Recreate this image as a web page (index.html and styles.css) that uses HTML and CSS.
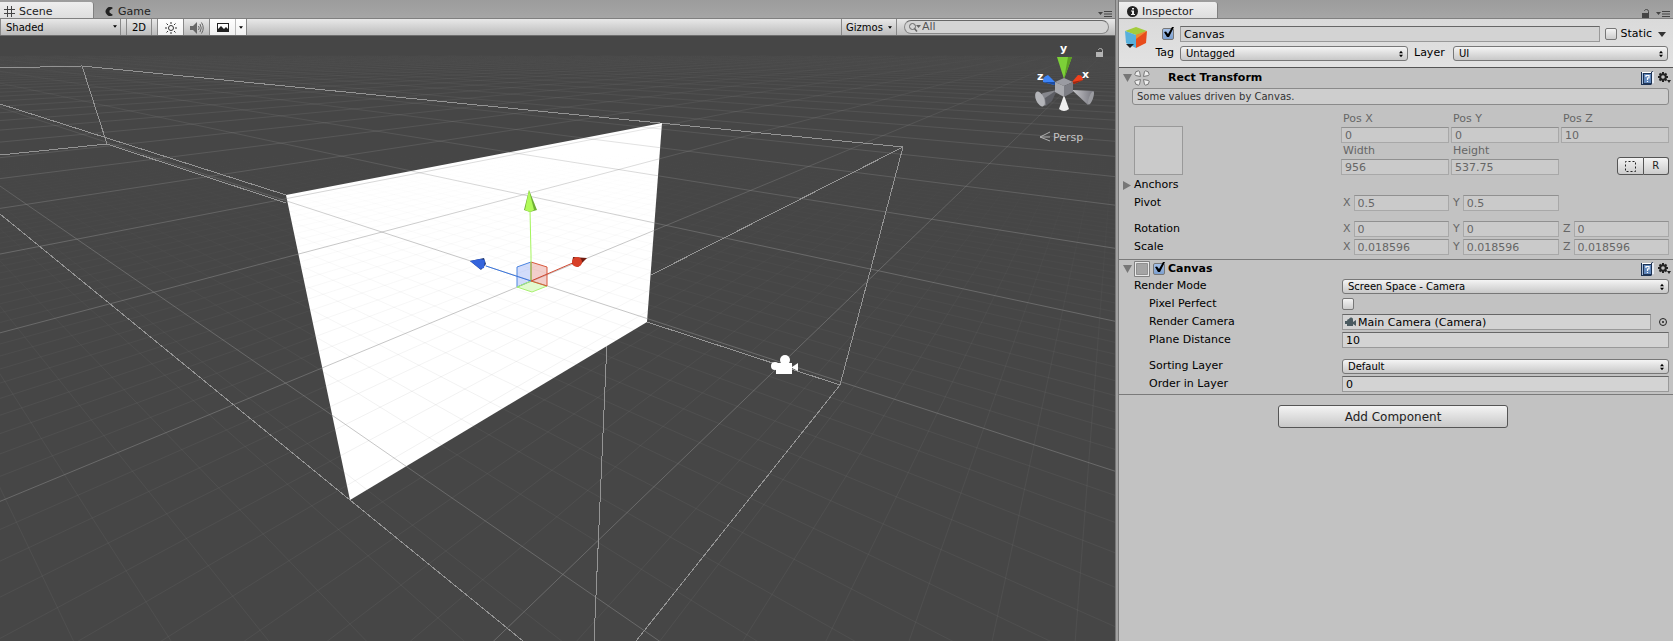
FILE: index.html
```html
<!DOCTYPE html>
<html lang="en">
<head>
<meta charset="utf-8">
<title>Scene</title>
<link rel="stylesheet" href="styles.css">
</head>
<body>

<!-- shared icons -->
<svg class="defs" width="0" height="0">
	<symbol id="updown" viewBox="0 0 5 8"><path d="M0 3L2.500 0L5 3zM0 5L2.500 8L5 5z"/></symbol>
	<symbol id="down" viewBox="0 0 6 4"><path d="M0 0H6L3 4z"/></symbol>
	<symbol id="menu" viewBox="0 0 14 7"><path d="M0 1H5L2.500 4zM6 0H14V1H6zM6 2.500H14V3.500H6zM6 5H14V6H6z"/></symbol>
	<symbol id="lock" viewBox="0 0 8 9"><path d="M0 4H7V9H0z"/><path d="M2.500 2V1.500Q3 .5 4.500 .5Q6.500 .5 6.500 2.500V4" fill="none" stroke="currentColor"/></symbol>
	<symbol id="book" viewBox="0 0 13 14">
		<path d="M0 1H10L12 0V12L10 14H0z" fill="#1d3354"/>
		<path d="M1 1H10V2H1z" fill="#fff"/>
		<path d="M3 3H10V12H3z" fill="#6288bc"/>
		<path d="M1 2H2V13H1z" fill="#a9bedb"/>
		<path d="M11 1H13V12L11 13z" fill="#e9eef6"/>
		<path d="M5 6V4.500H8V7H6.500V9M6.500 10V11" fill="none" stroke="#fff" stroke-width="1.200"/>
	</symbol>
	<symbol id="gear" viewBox="0 0 13 12">
		<circle cx="5" cy="5" r="2.800" fill="none" stroke="#222" stroke-width="2"/>
		<path d="M5 0V2M5 8V10M0 5H2M8 5H10M1.500 1.500L3 3M7 7L8.500 8.500M8.500 1.500L7 3M1.500 8.500L3 7" stroke="#222" stroke-width="2"/>
		<path d="M9 8H13L11 11z" fill="#222"/>
	</symbol>
</svg>

<div class="editor">

	<section class="scene">
		<div class="tabs">
			<button class="tab active tab-scene">
				<svg width="11" height="11" viewBox="0 0 11 11"><path d="M3.500 0V11M7.500 0V11M0 3.500H11M0 7.500H11" stroke="#444" fill="none"/></svg>
				Scene
			</button>
			<button class="tab">
				<svg width="9" height="9" viewBox="0 0 9 9"><path d="M8 1A4.500 4.500 0 1 0 8 8L4.500 5.500V3.500z" fill="#222"/></svg>
				Game
			</button>
			<svg class="tab-menu" width="14" height="7"><use href="#menu"/></svg>
		</div>

		<div class="toolbar">
			<span class="tool-select">
				<select class="shading" aria-label="Draw mode"><option>Shaded</option></select>
				<svg class="arrow" width="4" height="3"><use href="#down"/></svg>
			</span>
			<button class="tool">2D</button>
			<div class="tool-group">
				<button class="tool on" aria-label="Lighting">
					<svg width="12" height="12" viewBox="0 0 12 12"><circle cx="6" cy="6" r="2.500" fill="none" stroke="#333"/><path d="M6 0V2M6 10V12M0 6H2M10 6H12M1.500 1.500L3 3M9 9L10.500 10.500M10.500 1.500L9 3M1.500 10.500L3 9" stroke="#333"/></svg>
				</button>
				<button class="tool" aria-label="Audio">
					<svg width="14" height="12" viewBox="0 0 14 12"><path d="M0 4H3L7 0V12L3 8H0z" fill="#666"/><path d="M8.500 4Q10 6 8.500 8M10 2Q12.500 6 10 10M11.500 .5Q15 6 11.500 11.500" fill="none" stroke="#666"/></svg>
				</button>
				<button class="tool fx" aria-label="Effects">
					<svg width="12" height="9" viewBox="0 0 12 9"><path d="M0 0H12V9H0z" fill="#222"/><path d="M1 1H11V6L9 4L7 6L4 3L1 6z" fill="#fff"/></svg>
				</button>
				<button class="tool on more" aria-label="Effects menu"><svg width="4" height="3"><use href="#down"/></svg></button>
			</div>
			<div class="tool-right">
				<button class="tool gizmos">Gizmos <svg width="4" height="3"><use href="#down"/></svg></button>
				<label class="search">
					<svg width="12" height="9" viewBox="0 0 12 9"><circle cx="3.500" cy="3.500" r="3" fill="none" stroke="#666"/><path d="M5.500 5.500L8 8.500" stroke="#666" stroke-width="1.500"/><path d="M7 2H12L9.500 5z" fill="#666"/></svg>
					<input type="text" value="All" aria-label="Search scene">
				</label>
			</div>
		</div>

		<div class="viewport">
			<svg class="world" viewBox="0 36 1115 605" preserveAspectRatio="xMidYMin slice">
				<defs>
					<linearGradient id="fadeMajor" gradientUnits="userSpaceOnUse" x1="0" y1="50" x2="0" y2="250">
						<stop offset="0" stop-color="#8c8c8c" stop-opacity="0"/>
						<stop offset=".1" stop-color="#8c8c8c" stop-opacity=".07"/>
						<stop offset=".35" stop-color="#8c8c8c" stop-opacity=".2"/>
						<stop offset="1" stop-color="#8c8c8c" stop-opacity=".5"/>
					</linearGradient>
					<linearGradient id="fadeMinor" gradientUnits="userSpaceOnUse" x1="0" y1="150" x2="0" y2="400">
						<stop offset="0" stop-color="#8c8c8c" stop-opacity="0"/>
						<stop offset="1" stop-color="#8c8c8c" stop-opacity=".12"/>
					</linearGradient>
				</defs>

				<!-- camera frustum -->
				<g class="frustum">
					<path d="M0 68L82 66L903 147L840 385L636 641"/>
					<path d="M82 66L107 144L0 155"/>
					<path d="M0 104L286 195"/>
					<path d="M107 144L286 203"/>
					<path d="M0 214L350 500L523 641"/>
					<path d="M903 147L651 275"/>
					<path d="M647 322L840 385"/>
					<path d="M609 295L594 641"/>
				</g>

				<polygon class="canvas-plane" points="286,195 662,123 647,322 350,500"/>
				<g id="grid"></g>

				<!-- camera -->
				<g fill="#fff">
					<circle cx="785" cy="360" r="5"/>
					<circle cx="775" cy="366" r="4"/>
					<path d="M776 363H792V367L798 363V371L792 368V374H776z"/>
				</g>

				<!-- move handle -->
				<path d="M517 267L531 262L531 281L517 287z" fill="#4a74f0" fill-opacity=".25" stroke="#4a84e0"/>
				<path d="M517 287L531 281L547 286L532 292z" fill="#a0f060" fill-opacity=".3" stroke="#a8f070"/>
				<path d="M531 262L547 267L547 286L531 281z" fill="#d04030" fill-opacity=".25" stroke="#d8583c"/>
				<path d="M531 281V255L530 210" fill="none" stroke="#a4f45c"/>
				<path d="M531 281L486 266" stroke="#3c78e0"/>
				<path d="M531 281L575 262" stroke="#d04830"/>
				<path d="M529 190L524 210L530 212L537 210z" fill="#6fae34"/>
				<path d="M529 190L525 210L530 212L534 210z" fill="#b0fa58"/>
				<path d="M470 261L484 258L486 264L481 270z" fill="#1c3470"/>
				<path d="M470 261L480 259L485 260L484 268L480 269z" fill="#3464dc"/>
				<path d="M587 258L573 257L572 264L578 267z" fill="#701c10"/>
				<ellipse cx="577" cy="262" rx="5" ry="5" fill="#d84028"/>
			</svg>

			<!-- orientation gizmo -->
			<svg class="orient" width="85" height="105" viewBox="1030 40 85 105">
				<defs>
					<linearGradient id="cone"><stop offset="0" stop-color="#c8c8cc"/><stop offset="1" stop-color="#74747c"/></linearGradient>
				</defs>
				<path d="M1057 90L1043 93L1036 98L1045 106z" fill="#85868c"/>
				<path d="M1057 90L1052 101L1046 106L1045 98z" fill="#5d5e64"/>
				<ellipse cx="1040" cy="99" rx="4" ry="8" transform="rotate(-24 1040 99)" fill="#b4b5b9"/>
				<path d="M1072 90L1094 91L1088 105z" fill="url(#cone)"/>
				<ellipse cx="1091" cy="98" rx="2" ry="7" transform="rotate(20 1091 98)" fill="#9a9ba0"/>
				<path d="M1064 95L1059 109Q1064 113 1069 109z" fill="#f0f0f0"/>
				<path d="M1056 83L1048 75Q1042 77 1043 82L1054 85z" fill="#3d84f6"/>
				<path d="M1043 82L1055 85L1056 82z" fill="#1c4ca0"/>
				<path d="M1072 82L1078 75Q1083 75 1083 80L1074 84z" fill="#f0401c"/>
				<path d="M1083 80L1074 84L1072 82z" fill="#9c2810"/>
				<path d="M1057 57H1072L1064 79z" fill="#7cd038"/>
				<path d="M1068 57H1072L1064 79z" fill="#5ca024"/>
				<path d="M1055 82L1064 78L1073 82L1064 86z" fill="#9a9ba2"/>
				<path d="M1055 82L1064 86V97L1055 92z" fill="#a8a9ae"/>
				<path d="M1073 82L1064 86V97L1073 92z" fill="#7c7d84"/>
				<text x="1060" y="52" class="axis">y</text>
				<text x="1037" y="80" class="axis">z</text>
				<text x="1082" y="78" class="axis">x</text>
				<g color="#b4b4b4" fill="#b4b4b4"><use href="#lock" x="1096" y="48" width="8" height="9"/></g>
				<path d="M1050 132L1040 137L1050 141M1040 137H1050" fill="none" stroke="#b0b0b0"/>
				<text x="1053" y="141" class="persp">Persp</text>
			</svg>
		</div>
	</section>

	<aside class="inspector">
		<div class="tabs">
			<button class="tab active tab-inspector">
				<svg width="11" height="11" viewBox="0 0 11 11"><circle cx="5.500" cy="5.500" r="5.500" fill="#222"/><path d="M5 2H7V3.500H5zM4 4.500H7V8H8V9H4V8H5V5.500H4z" fill="#eee"/></svg>
				Inspector
			</button>
			<svg class="tab-lock" width="8" height="9"><use href="#lock"/></svg>
			<svg class="tab-menu" width="14" height="7"><use href="#menu"/></svg>
		</div>

		<header class="object">
			<svg class="cube" width="22" height="21" viewBox="0 0 22 21">
				<path d="M0 4L11 0L22 4L11 8z" fill="#a4cc3c"/>
				<path d="M0 4L11 8V21L1 16z" fill="#58b0dc"/>
				<path d="M22 4L11 8V21L21 16z" fill="#e84c1c"/>
				<path d="M22 4L11 8V12z" fill="#f08c30"/>
				<path d="M1 17H9L5 21z" fill="#222"/>
			</svg>
			<div class="object-rows">
				<div class="object-row">
					<span class="tag-label"><input type="checkbox" checked aria-label="Active"></span>
					<input class="field name" type="text" value="Canvas" aria-label="Name">
					<label class="static"><input type="checkbox"> Static</label>
					<svg class="static-arrow" width="8" height="5" viewBox="0 0 8 5"><path d="M0 0H8L4 5z" fill="#333"/></svg>
				</div>
				<div class="object-row">
					<label class="tag-label" for="tag">Tag</label>
					<span class="popup"><select id="tag"><option>Untagged</option></select><svg width="4" height="8"><use href="#updown"/></svg></span>
					<label class="layer-label" for="layer">Layer</label>
					<span class="popup layer"><select id="layer"><option>UI</option></select><svg width="4" height="8"><use href="#updown"/></svg></span>
				</div>
			</div>
		</header>

		<section class="component">
			<div class="title">
				<svg class="fold" width="9" height="8" viewBox="0 0 9 8"><path d="M0 0H9L4.500 8z"/></svg>
				<svg class="type" width="16" height="16" viewBox="0 0 16 16">
					<g fill="#eee" stroke="#777">
						<path id="petal" d="M6.500 6.500L1.500 5.500Q0 4 1.500 3Q1.500 1 3 1.500Q4 0 5.500 1.500z"/>
						<use href="#petal" transform="rotate(90 8 8)"/>
						<use href="#petal" transform="rotate(180 8 8)"/>
						<use href="#petal" transform="rotate(270 8 8)"/>
					</g>
				</svg>
				<h2>Rect Transform</h2>
				<svg class="help" width="13" height="14"><use href="#book"/></svg>
				<svg width="13" height="12"><use href="#gear"/></svg>
			</div>
			<p class="helpbox">Some values driven by Canvas.</p>

			<div class="rect">
				<div class="anchor-preview"></div>
				<div class="rect-grid">
					<label for="px">Pos X</label><label for="py">Pos Y</label><label for="pz">Pos Z</label>
					<input class="field" id="px" value="0" disabled>
					<input class="field" id="py" value="0" disabled>
					<input class="field" id="pz" value="10" disabled>
					<label for="w">Width</label><label for="h">Height</label><span></span>
					<input class="field" id="w" value="956" disabled>
					<input class="field" id="h" value="537.75" disabled>
					<div class="modes">
						<button aria-label="Blueprint mode"><svg width="11" height="11" viewBox="0 0 11 11"><path d="M.5 .5H10.500V10.500H.5z" fill="none" stroke="#222" stroke-dasharray="2 2" stroke-dashoffset="1"/></svg></button>
						<button>R</button>
					</div>
				</div>
			</div>

			<div class="row anchors">
				<svg class="fold-closed" width="8" height="9" viewBox="0 0 8 9"><path d="M0 0L8 4.500L0 9z"/></svg>
				<span class="label">Anchors</span>
			</div>
			<div class="row">
				<span class="label">Pivot</span>
				<div class="vec">
					<label>X <input class="field" value="0.5" disabled></label>
					<label>Y <input class="field" value="0.5" disabled></label>
				</div>
			</div>
			<div class="row spaced">
				<span class="label">Rotation</span>
				<div class="vec">
					<label>X <input class="field" value="0" disabled></label>
					<label>Y <input class="field" value="0" disabled></label>
					<label>Z <input class="field" value="0" disabled></label>
				</div>
			</div>
			<div class="row">
				<span class="label">Scale</span>
				<div class="vec">
					<label>X <input class="field" value="0.018596" disabled></label>
					<label>Y <input class="field" value="0.018596" disabled></label>
					<label>Z <input class="field" value="0.018596" disabled></label>
				</div>
			</div>
		</section>

		<section class="component canvas">
			<div class="title">
				<svg class="fold" width="9" height="8" viewBox="0 0 9 8"><path d="M0 0H9L4.500 8z"/></svg>
				<svg class="type" width="16" height="16" viewBox="0 0 16 16"><path d="M.5 .5H15.500V15.500H.5z" fill="#e8e8e8" stroke="#808080"/><path d="M2.500 2.500H13.500V13.500H2.500z" fill="#a4a4a4" stroke="#909090"/></svg>
				<input type="checkbox" checked aria-label="Enable Canvas">
				<h2>Canvas</h2>
				<svg class="help" width="13" height="14"><use href="#book"/></svg>
				<svg width="13" height="12"><use href="#gear"/></svg>
			</div>
			<div class="row">
				<label class="label" for="mode">Render Mode</label>
				<span class="popup"><select id="mode"><option>Screen Space - Camera</option></select><svg width="4" height="8"><use href="#updown"/></svg></span>
			</div>
			<div class="row indent">
				<label class="label" for="pixel">Pixel Perfect</label>
				<input type="checkbox" id="pixel">
			</div>
			<div class="row indent">
				<label class="label" for="cam">Render Camera</label>
				<div class="object-field">
					<svg width="11" height="10" viewBox="0 0 11 10"><path d="M2 4H0V7H2V9H8V7L11 9V3L8 5V3A2 2 0 1 0 4 2Q2 2 2 4z" fill="#4a5a60"/></svg>
					<input class="field" id="cam" value="Main Camera (Camera)">
				</div>
				<button class="pick" aria-label="Select object"><svg width="8" height="8" viewBox="0 0 8 8"><circle cx="4" cy="4" r="3.500" fill="none" stroke="#222"/><circle cx="4" cy="4" r="1" fill="#222"/></svg></button>
			</div>
			<div class="row indent">
				<label class="label" for="plane">Plane Distance</label>
				<input class="field" id="plane" value="10">
			</div>
			<div class="row indent spaced">
				<label class="label" for="sort">Sorting Layer</label>
				<span class="popup"><select id="sort"><option>Default</option></select><svg width="4" height="8"><use href="#updown"/></svg></span>
			</div>
			<div class="row indent">
				<label class="label" for="order">Order in Layer</label>
				<input class="field" id="order" value="0">
			</div>
		</section>

		<div class="add-row">
			<button class="add">Add Component</button>
		</div>
	</aside>
</div>

<script src="grid.js"></script>
</body>
</html>
```
FILE: styles.css
```css
* {
	box-sizing: border-box;
}

body {
	margin: 0;
	background: #a2a2a2;
	color: #000;
	font: 11px/16px "DejaVu Sans", Verdana, sans-serif;
}

button, input, select {
	margin: 0;
	font: inherit;
	color: inherit;
}

svg {
	display: block;
	flex: none;
}

.defs {
	position: absolute;
}

.editor {
	display: flex;
	gap: 2px;
	min-height: 100vh;
}

.scene {
	display: flex;
	flex-direction: column;
	flex: 1;
	min-width: 0;
	border-right: 1px solid #777;
}

.inspector {
	flex: 0 0 555px;
	border-left: 1px solid #777;
	background: #c2c2c2;
}

/* tabs */
.tabs {
	display: flex;
	align-items: flex-end;
	height: 19px;
	padding-right: 3px;
	background: linear-gradient(#9c9c9c, #a6a6a6);
	border-bottom: 1px solid #808080;
	color: #444;
}

.tab {
	display: flex;
	align-items: center;
	gap: 4px;
	height: 16px;
	padding: 3px 11px 0;
	border: 0;
	background: none;
	color: #222;
}

.tab.active {
	padding: 3px 4px 0;
	border-right: 1px solid #808080;
	border-radius: 0 3px 0 0;
	background: linear-gradient(#eee, #dedede);
}

.tab-scene {
	width: 94px;
}

.tab-inspector {
	width: 99px;
}

.tab.active.tab-inspector {
	padding-left: 8px;
}

.tab-menu {
	margin: 0 0 0 auto;
	height: 7px;
	align-self: flex-end;
}

.tabs svg {
	fill: #444;
}

.tab-lock {
	margin-left: auto;
}

.tab-lock + .tab-menu {
	margin-left: 6px;
}

/* scene toolbar */
.toolbar {
	display: flex;
	height: 17px;
	border-bottom: 1px solid #6e6e6e;
	background: linear-gradient(#e8e8e8, #bcbcbc);
	font-size: 10px;
}

.tool-select {
	position: relative;
	margin-right: 5px;
}

.shading {
	width: 121px;
	height: 16px;
	padding: 1px 5px 0;
	appearance: none;
	border: solid #888;
	border-width: 0 1px;
	background: none;
}

.arrow {
	position: absolute;
	right: 4px;
	top: 6px;
}

.tool {
	display: flex;
	align-items: center;
	justify-content: center;
	width: 26px;
	height: 16px;
	padding: 1px 0 0;
	border: solid #888;
	border-width: 0 1px 0 0;
	background: none;
}

.toolbar > .tool {
	border-left-width: 1px;
}

.tool.on, .tool.fx {
	background: linear-gradient(#fff, #f0f0f0);
}

.tool.fx {
	border-color: #bbb;
}

.tool.more {
	width: 11px;
}

.tool-group {
	display: flex;
	margin-left: 5px;
	border-left: 1px solid #888;
}

.tool-right {
	display: flex;
	margin-left: auto;
}

.gizmos {
	gap: 5px;
	width: 56px;
	border-left-width: 1px;
}

.search {
	display: flex;
	align-items: center;
	gap: 1px;
	width: 205px;
	height: 14px;
	margin: 1px 6px 0 7px;
	padding: 0 4px;
	border: 1px solid #888;
	border-top-color: #666;
	border-radius: 7px;
	background: #d4d4d4;
	color: #555;
}

.search input {
	flex: 1;
	min-width: 0;
	padding: 0;
	border: 0;
	background: none;
	font-size: 11px;
	line-height: 12px;
}

/* viewport */
.viewport {
	position: relative;
	flex: 1;
	background: #464646;
	overflow: hidden;
}

.world {
	position: absolute;
	width: 100%;
	height: 100%;
}

.world .frustum path {
	fill: none;
	stroke: #949494;
	shape-rendering: crispEdges;
}

.canvas-plane {
	fill: #fff;
}

#grid .major {
	stroke: url(#fadeMajor);
}

#grid .minor {
	stroke: url(#fadeMinor);
}

.orient {
	position: absolute;
	top: 4px;
	right: 0;
}

.axis {
	fill: #fff;
	font-size: 11px;
	font-weight: bold;
}

.persp {
	fill: #c4c4c4;
	font-size: 11px;
}

/* form controls */
input[type=checkbox] {
	position: relative;
	flex: none;
	width: 12px;
	height: 12px;
	appearance: none;
	border: 1px solid #777;
	border-radius: 2px;
	background: linear-gradient(#f4f4f4, #ccc);
}

input[type=checkbox]:checked {
	background: linear-gradient(#a4c0e8, #7ca0d0);
}

input[type=checkbox]:checked::after {
	content: "";
	position: absolute;
	right: -1px;
	bottom: 2px;
	width: 10px;
	height: 10px;
	background: #000;
	clip-path: polygon(0 50%, 20% 45%, 40% 70%, 80% 0, 100% 0, 50% 100%, 30% 100%);
}

.field {
	flex: 1;
	min-width: 0;
	width: 100%;
	height: 16px;
	padding: 0 3px;
	border: 1px solid #999;
	border-top-color: #666;
	border-radius: 0;
	background: #d3d3d3;
	line-height: 14px;
}

.field:disabled {
	border-color: #a8a8a8;
	border-top-color: #909090;
	background: #cacaca;
	color: #666;
}

.popup {
	position: relative;
	display: flex;
	flex: 1;
	height: 15px;
}

.popup select {
	width: 100%;
	padding: 0 5px;
	appearance: none;
	border: 1px solid #777;
	border-radius: 3px;
	background: linear-gradient(#f4f4f4, #c8c8c8);
	font-size: 10px;
	line-height: 13px;
}

.popup svg {
	position: absolute;
	right: 5px;
	top: 4px;
}

/* object header */
.object {
	display: flex;
	height: 49px;
	padding: 7px 5px 0 6px;
	border-bottom: 1px solid #555;
	background: linear-gradient(#dadada, #e2e2e2);
}

.cube {
	margin-top: 1px;
}

.object-rows {
	flex: 1;
}

.object-row {
	display: flex;
	align-items: center;
	height: 16px;
	margin-bottom: 3px;
}

.tag-label {
	display: flex;
	justify-content: flex-end;
	width: 27px;
	margin-right: 6px;
}

.static {
	display: flex;
	align-items: center;
	gap: 4px;
	margin-left: 5px;
}

.static-arrow {
	margin: 0 2px 0 6px;
}

.layer-label {
	width: 45px;
	padding-left: 6px;
}

.popup.layer {
	flex: 0 0 215px;
}

/* components */
.component {
	padding-bottom: 2px;
	border-bottom: 1px solid #7a7a7a;
}

.title {
	display: flex;
	align-items: center;
	height: 20px;
	padding: 0 2px 0 4px;
}

.canvas .title {
	height: 18px;
}

.canvas {
	padding-bottom: 0;
}

.fold, .fold-closed {
	fill: #777;
}

.fold {
	margin-right: 2px;
}

.title h2 {
	flex: 1;
	margin: 0 0 0 18px;
	font-size: 11px;
}

.title input {
	margin-left: 3px;
}

.title input + h2 {
	margin-left: 3px;
}

.help {
	margin-right: 4px;
}

.helpbox {
	height: 17px;
	margin: 0 4px 0 13px;
	padding: 0 4px;
	border: 1px solid #8a8a8a;
	border-radius: 3px;
	background: #cecece;
	color: #333;
	font-size: 10px;
	line-height: 15px;
}

.rect {
	display: flex;
	align-items: flex-end;
	justify-content: space-between;
	margin: 6px 4px 2px 15px;
}

.anchor-preview {
	width: 49px;
	height: 49px;
	border: 1px solid #999;
	background: #cacaca;
}

.rect-grid {
	display: grid;
	grid-template-columns: repeat(3, 1fr);
	gap: 0 2px;
	width: 328px;
	color: #666;
}

.rect-grid label {
	padding-left: 2px;
}

.modes {
	display: flex;
	justify-self: end;
	width: 52px;
	height: 18px;
	margin-top: -2px;
}

.modes button {
	display: flex;
	align-items: center;
	justify-content: center;
	flex: 1;
	padding: 0;
	border: 1px solid #555;
	border-radius: 3px 0 0 3px;
	background: linear-gradient(#f4f4f4, #ccc);
	color: #222;
	font-size: 10px;
}

.modes button + button {
	border-left: 0;
	border-radius: 0 3px 3px 0;
}

.row {
	display: flex;
	align-items: center;
	height: 16px;
	margin: 0 4px 2px 15px;
}

.row.spaced {
	margin-top: 10px;
}

.row.anchors {
	margin-left: 4px;
	gap: 3px;
}

.label {
	flex: 0 0 208px;
}

.indent {
	padding-left: 15px;
	margin-left: 15px;
}

.indent .label {
	flex-basis: 193px;
}

.vec {
	display: grid;
	grid-template-columns: repeat(3, 1fr);
	gap: 2px;
	flex: 1;
	margin-left: -1px;
	color: #666;
}

.vec label {
	display: flex;
	gap: 3px;
	padding-left: 2px;
}

.object-field {
	display: flex;
	position: relative;
	flex: 1;
}

.object-field svg {
	position: absolute;
	left: 3px;
	top: 3px;
}

.object-field .field {
	padding-left: 15px;
}

.pick {
	display: flex;
	justify-content: center;
	width: 18px;
	padding: 0 0 0 6px;
	border: 0;
	background: none;
}

.add-row {
	display: flex;
	justify-content: center;
	padding: 10px 6px 0 0;
}

.add {
	width: 230px;
	height: 23px;
	padding: 0;
	border: 1px solid #555;
	border-radius: 3px;
	background: linear-gradient(#f4f4f4, #c8c8c8);
	color: #222;
	font-size: 12px;
}
```
FILE: grid.js
```js
// ground grid in perspective: both line families run to a point on the horizon
const origin = { x: 532, y: 281 };
const left = { x: -216, y: 37, step: 0.251 };
const right = { x: 1121, y: 37, step: 0.295 };
const grid = document.getElementById("grid");

function project(a, b) {
	const u = a * left.step;
	const v = b * right.step;
	const w = 1 + u + v;
	return [(origin.x + u * left.x + v * right.x) / w, (origin.y + u * left.y + v * right.y) / w];
}

function line(from, to, type) {
	const el = document.createElementNS("http://www.w3.org/2000/svg", "line");
	el.setAttribute("x1", from[0]);
	el.setAttribute("y1", from[1]);
	el.setAttribute("x2", to[0]);
	el.setAttribute("y2", to[1]);
	el.setAttribute("class", type);
	grid.appendChild(el);
}

// w is the depth, 0.35 is just below the view and 13 is where the grid ends
function pair(n, type) {
	const a = w => (w - 1 - n * right.step) / left.step;
	const b = w => (w - 1 - n * left.step) / right.step;
	line(project(a(0.35), n), project(a(13), n), type);
	line(project(n, b(0.35)), project(n, b(13)), type);
}

for (let i = -20; i <= 80; i++) {
	if (i % 10 !== 0) pair(i / 10, "minor");
}
for (let i = -2; i <= 40; i++) {
	pair(i, "major");
}
```
